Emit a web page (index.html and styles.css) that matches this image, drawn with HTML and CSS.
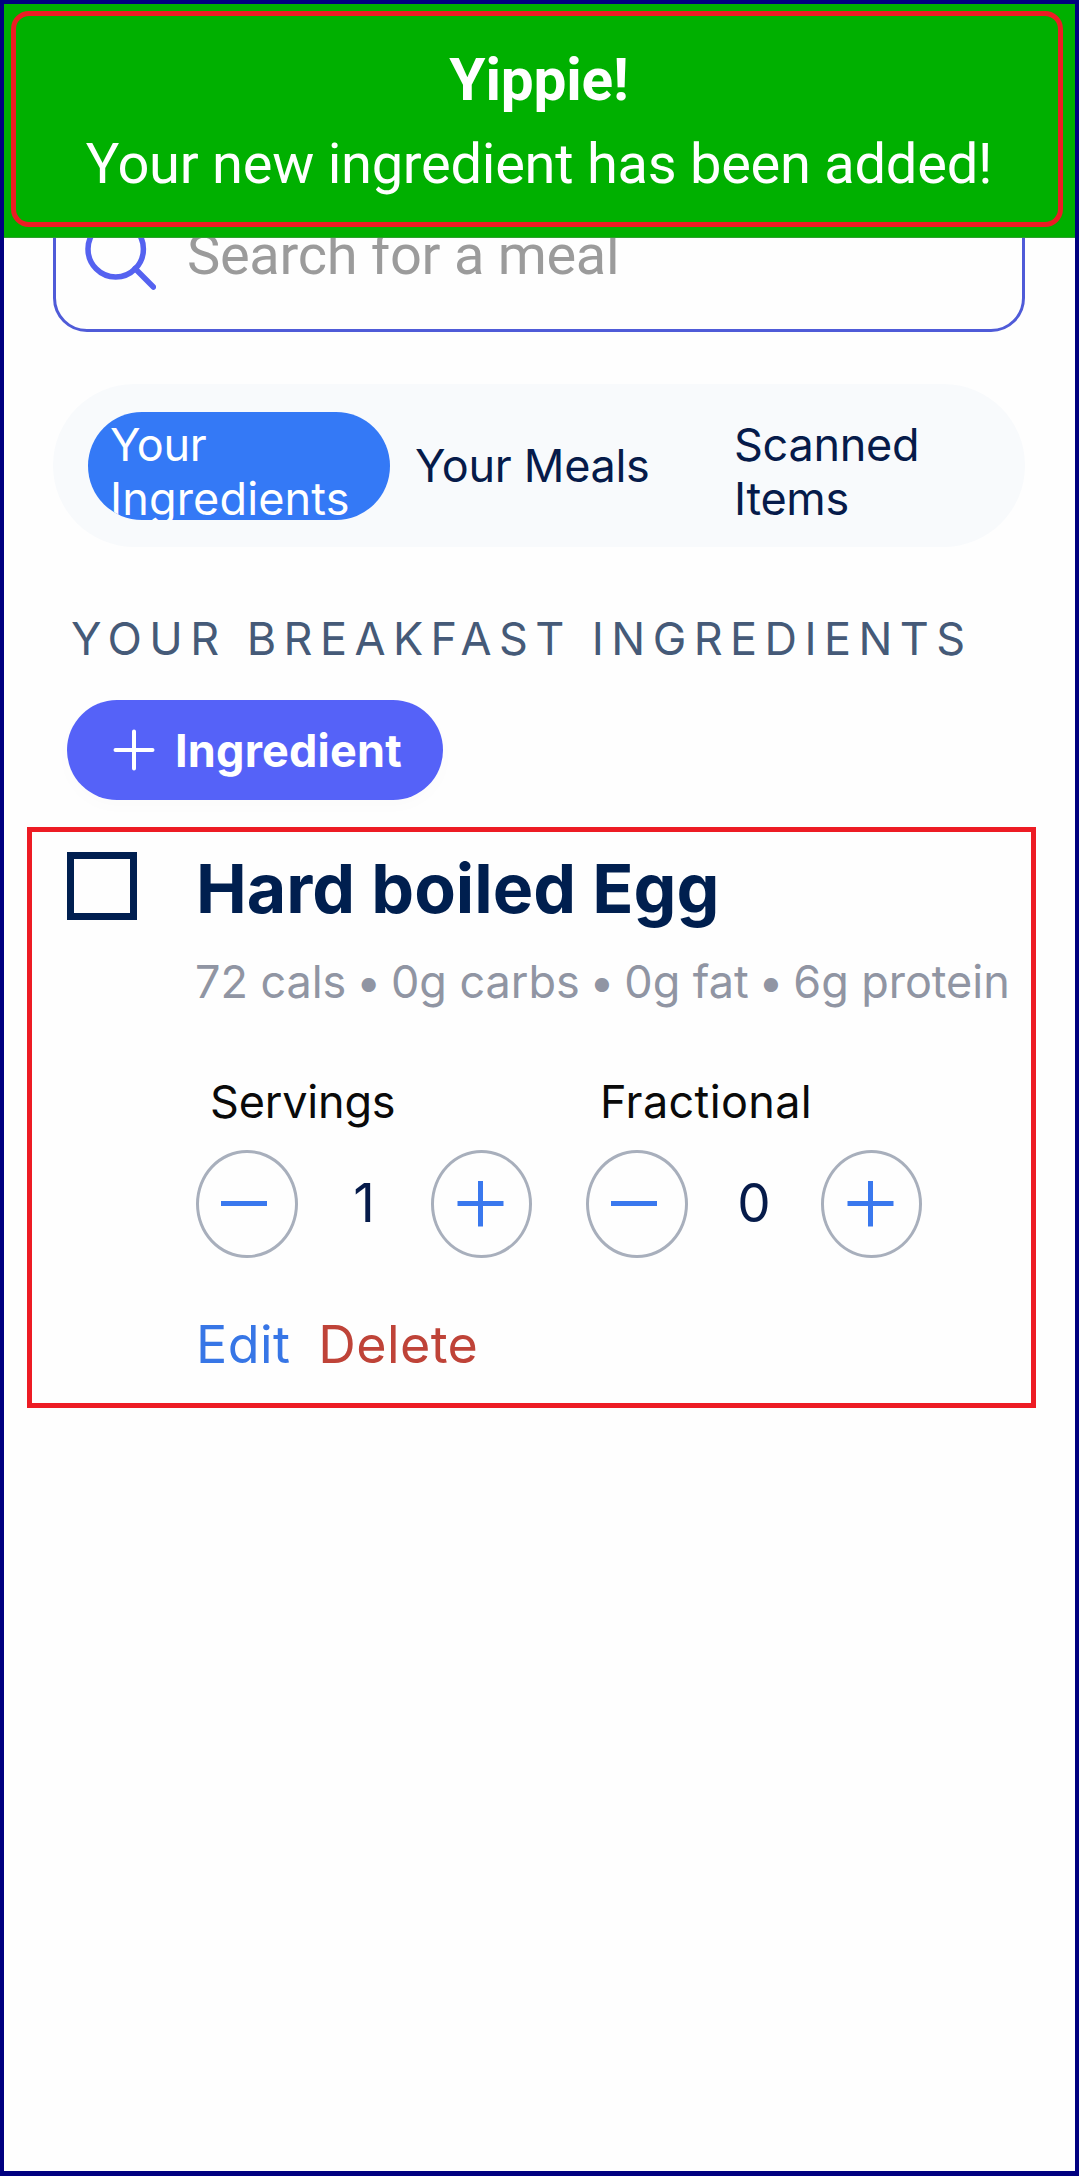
FILE: index.html
```
<!DOCTYPE html>
<html lang="en">
<head>
<meta charset="utf-8">
<title>Breakfast ingredients</title>
<link rel="stylesheet" href="styles.css">
</head>
<body>
<div class="screen">
  <div class="toast" role="status">
    <div class="toast-frame">
      <div class="toast-title">Yippie!</div>
      <div class="toast-text">Your new ingredient has been added!</div>
    </div>
  </div>

  <main class="content">
    <div class="search">
      <svg class="search-icon" width="76" height="76" viewBox="0 0 76 76" fill="none" stroke="#5562f0" stroke-width="5.5" stroke-linecap="round">
        <ellipse cx="35.7" cy="35" rx="27.7" ry="28"/>
        <path d="M55 54.5 L73.4 73"/>
      </svg>
      <span class="search-placeholder">Search for a meal</span>
    </div>

    <nav class="tabs">
      <div class="tab tab-active"><span>Your</span><span class="tab-wide">Ingredients</span></div>
      <div class="tab tab-single"><span>Your Meals</span></div>
      <div class="tab"><span>Scanned</span><span>Items</span></div>
    </nav>

    <h2 class="heading">YOUR BREAKFAST INGREDIENTS</h2>

    <div class="add-button">
      <svg width="42" height="42" viewBox="0 0 42 42" fill="none" stroke="#fff" stroke-width="4" stroke-linecap="round"><path d="M2.5 21H39.5M21 2.5V39.5"/></svg>
      <span>Ingredient</span>
    </div>
  </main>

  <section class="item">
    <div class="checkbox"></div>
    <div class="item-body">
      <h3 class="item-title">Hard boiled Egg</h3>
      <div class="item-facts">72 cals <span class="dot">•</span> 0g carbs <span class="dot">•</span> 0g fat <span class="dot">•</span> 6g protein</div>
      <div class="counters">
        <div class="counter">
          <div class="counter-label">Servings</div>
          <div class="stepper">
            <div class="round"><svg width="96" height="102" viewBox="0 0 96 102" stroke="#3a78ee" stroke-width="5"><path d="M22 50.5H68"/></svg></div>
            <span class="value">1</span>
            <div class="round"><svg width="96" height="102" viewBox="0 0 96 102" stroke="#3a78ee" stroke-width="5"><path d="M23.5 50.5H69.5M46.5 28V73.5"/></svg></div>
          </div>
        </div>
        <div class="counter">
          <div class="counter-label counter-label-wide">Fractional</div>
          <div class="stepper">
            <div class="round"><svg width="96" height="102" viewBox="0 0 96 102" stroke="#3a78ee" stroke-width="5"><path d="M22 50.5H68"/></svg></div>
            <span class="value">0</span>
            <div class="round"><svg width="96" height="102" viewBox="0 0 96 102" stroke="#3a78ee" stroke-width="5"><path d="M23.5 50.5H69.5M46.5 28V73.5"/></svg></div>
          </div>
        </div>
      </div>
      <div class="actions"><span class="edit">Edit</span><span class="delete">Delete</span></div>
    </div>
  </section>
</div>
</body>
</html>
```
FILE: styles.css
```
* { box-sizing: border-box; }

body {
  margin: 0;
  background: #fff;
  font-family: Inter, "Liberation Sans", sans-serif;
}

.screen {
  position: relative;
  width: 1079px;
  height: 2176px;
  border: 4px solid #000080;
  border-bottom-width: 5px;
  background: #fefefe;
  overflow: hidden;
}

/* Toast lies over the top of the page */
.toast {
  position: absolute;
  top: 0;
  left: 0;
  right: 0;
  z-index: 1;
  height: 234px;
  padding: 7px 12px 10px 7px;
  background: #00b000;
  border-bottom: 1px solid #2f9f2f;
}

.toast-frame {
  height: 216px;
  padding: 22px 0 0 4px;
  border: 5px solid #ed1c24;
  border-radius: 18px;
  color: #fff;
  font-family: Roboto, "Liberation Sans", sans-serif;
  line-height: 84px;
  text-align: center;
  white-space: nowrap;
}

.toast-title {
  font-size: 58.5px;
  font-weight: 700;
  letter-spacing: -0.15px;
}

.toast-text {
  font-size: 56px;
  letter-spacing: -0.26px;
}

.content {
  padding: 176px 50px 0 49px;
}

.search {
  display: flex;
  align-items: center;
  height: 152px;
  padding: 0 27px;
  border: 3px solid #4f5bd8;
  border-radius: 34px;
}

.search-icon {
  flex: none;
  margin: -8px 28px 0 -3px;
}

.search-placeholder {
  margin: -2px 0 0 3px;
  color: #9b9b9b;
  font-family: Roboto, "Liberation Sans", sans-serif;
  font-size: 56px;
  letter-spacing: -0.3px;
}

.tabs {
  display: flex;
  margin-top: 52px;
  height: 163px;
  padding: 28px 0 27px 35px;
  border-radius: 82px;
  background: #f8fafc;
}

.tab {
  display: flex;
  flex: none;
  flex-direction: column;
  width: 319px;
  padding: 6px 0 0 22px;
  color: #061b4a;
  font-size: 45px;
  line-height: 54.3px;
  letter-spacing: -0.3px;
  white-space: nowrap;
}

.tab-active {
  width: 302px;
  height: 108px;
  margin-right: 3px;
  border-radius: 54px;
  background: #3479f6;
  color: #fff;
  overflow: hidden;
}

.tab-wide { letter-spacing: 0.15px; }

.tab-single {
  justify-content: center;
  padding-top: 0;
}

.heading {
  margin: 62px 0 0 18px;
  color: #455a78;
  font-size: 45px;
  font-weight: 400;
  line-height: 60px;
  letter-spacing: 7.43px;
  white-space: nowrap;
}

.add-button {
  display: flex;
  align-items: center;
  gap: 20px;
  width: 376px;
  height: 100px;
  margin: 31px 0 0 14px;
  padding-left: 46px;
  border-radius: 50px;
  background: #5562f8;
  box-shadow: 0 6px 18px rgba(0, 0, 0, 0.015);
  color: #fff;
  font-size: 45px;
  font-weight: 700;
  letter-spacing: 0.19px;
}

.item {
  display: flex;
  width: 1009px;
  height: 581px;
  margin: 27px 0 0 23px;
  padding: 16px 0 0 35px;
  border: 5px solid #ed1c24;
  white-space: nowrap;
}

.checkbox {
  flex: none;
  width: 70px;
  height: 68px;
  margin: 4px 59px 0 0;
  border: 7px solid #001f50;
}

.item-title {
  margin: 0;
  color: #001f4f;
  font-size: 68px;
  font-weight: 700;
  line-height: 80px;
}

.item-facts {
  margin: 24px 0 0 -1px;
  color: #9095a3;
  font-size: 45px;
  line-height: 60px;
  letter-spacing: -0.05px;
}

.dot { margin: 0 -2.9px; }

.counters {
  display: flex;
  gap: 54px;
  margin-top: 65px;
}

.counter-label {
  padding-left: 14px;
  color: #0a0a0a;
  font-size: 45px;
  line-height: 50px;
  letter-spacing: -0.19px;
}

.counter-label-wide { letter-spacing: 0.35px; }

.stepper {
  display: flex;
  width: 336px;
  margin-top: 23px;
}

.round {
  flex: none;
  width: 101.5px;
  height: 108px;
  border: 3px solid #a8afbc;
  border-radius: 50%;
}

.round svg { display: block; }

.value {
  flex: 1;
  color: #061b4a;
  font-size: 53px;
  line-height: 107px;
  text-align: center;
}

.actions {
  display: flex;
  gap: 28px;
  margin-top: 54px;
  font-size: 52px;
  line-height: 65px;
  letter-spacing: 0.4px;
}

.edit { color: #3776e6; }

.delete { color: #bf4338; }
```
